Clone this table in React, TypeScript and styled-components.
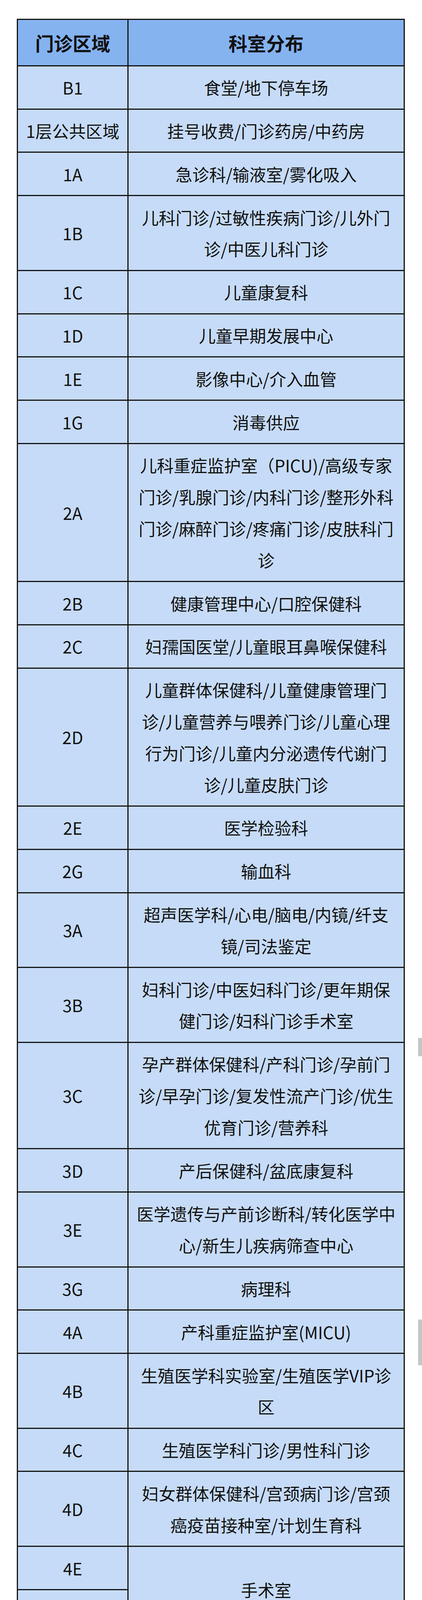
import styled, { createGlobalStyle } from 'styled-components'

const GlobalStyle = createGlobalStyle`
  html, body {
    margin: 0;
    padding: 0;
    background: #ffffff;
  }
  body {
    font-family: "Noto Sans CJK SC", "Noto Sans", sans-serif;
    color: #111111;
  }
`

type Row = { area: string; depts: string[] }

// 门诊 — line breaks kept as in the picture
const clinicRows: Row[] = [
  { area: 'B1', depts: ['食堂/地下停车场'] },
  { area: '1层公共区域', depts: ['挂号收费/门诊药房/中药房'] },
  { area: '1A', depts: ['急诊科/输液室/雾化吸入'] },
  { area: '1B', depts: ['儿科门诊/过敏性疾病门诊/儿外门', '诊/中医儿科门诊'] },
  { area: '1C', depts: ['儿童康复科'] },
  { area: '1D', depts: ['儿童早期发展中心'] },
  { area: '1E', depts: ['影像中心/介入血管'] },
  { area: '1G', depts: ['消毒供应'] },
  {
    area: '2A',
    depts: [
      '儿科重症监护室（PICU)/高级专家',
      '门诊/乳腺门诊/内科门诊/整形外科',
      '门诊/麻醉门诊/疼痛门诊/皮肤科门',
      '诊',
    ],
  },
  { area: '2B', depts: ['健康管理中心/口腔保健科'] },
  { area: '2C', depts: ['妇孺国医堂/儿童眼耳鼻喉保健科'] },
  {
    area: '2D',
    depts: [
      '儿童群体保健科/儿童健康管理门',
      '诊/儿童营养与喂养门诊/儿童心理',
      '行为门诊/儿童内分泌遗传代谢门',
      '诊/儿童皮肤门诊',
    ],
  },
  { area: '2E', depts: ['医学检验科'] },
  { area: '2G', depts: ['输血科'] },
  { area: '3A', depts: ['超声医学科/心电/脑电/内镜/纤支', '镜/司法鉴定'] },
  { area: '3B', depts: ['妇科门诊/中医妇科门诊/更年期保', '健门诊/妇科门诊手术室'] },
  {
    area: '3C',
    depts: ['孕产群体保健科/产科门诊/孕前门', '诊/早孕门诊/复发性流产门诊/优生', '优育门诊/营养科'],
  },
  { area: '3D', depts: ['产后保健科/盆底康复科'] },
  { area: '3E', depts: ['医学遗传与产前诊断科/转化医学中', '心/新生儿疾病筛查中心'] },
  { area: '3G', depts: ['病理科'] },
  { area: '4A', depts: ['产科重症监护室(MICU)'] },
  { area: '4B', depts: ['生殖医学科实验室/生殖医学VIP诊', '区'] },
  { area: '4C', depts: ['生殖医学科门诊/男性科门诊'] },
  { area: '4D', depts: ['妇女群体保健科/宫颈病门诊/宫颈', '癌疫苗接种室/计划生育科'] },
]

// 住院部
const wardRows: Row[] = [
  { area: 'B1', depts: ['食堂/地下停车场'] },
  { area: '1F', depts: ['静配中心/住院处/病区药房/消防控', '制室'] },
  { area: '2F', depts: ['信息机房/病案室/档案室'] },
  { area: '3F', depts: ['产科管理中心'] },
  { area: '4F', depts: ['产房'] },
  { area: '5F', depts: ['新生儿重症监护（NICU)'] },
  { area: '6F', depts: ['新生儿科'] },
  { area: '7F', depts: ['产科一区（一体化产房）'] },
  { area: '8F', depts: ['产科二区(特需)'] },
  { area: '9F', depts: ['产科三区(特需)'] },
  { area: '10F', depts: ['产科四区'] },
  { area: '11F', depts: ['产科五区'] },
  { area: '12F', depts: ['妇科一区（妇女肿瘤、普通妇科）'] },
  { area: '13F', depts: ['妇科二区（妇女内分泌）'] },
  { area: '14F', depts: ['乳腺保健科/小儿外科/外科'] },
  { area: '15F', depts: ['内科/介入血管'] },
  { area: '16F', depts: ['儿科一区'] },
  { area: '17F', depts: ['儿科二区（儿童呼吸）'] },
  { area: '18F', depts: ['孕产康养'] },
  { area: '19F', depts: ['产后康养'] },
]

// grey scroll thumbs left over in the screenshot
const thumbs = [
  { top: 2657, height: 47 },
  { top: 3378, height: 117 },
  { top: 4102, height: 183 },
  { top: 4892, height: 183 },
  { top: 5682, height: 182 },
  { top: 6472, height: 162 },
]

const Lines = ({ lines }: { lines: string[] }) => (
  <span>
    {lines.map((l, i) => (
      <span key={i}>
        {i > 0 && <br />}
        {l}
      </span>
    ))}
  </span>
)

const RowGroup = ({ row }: { row: Row }) => (
  <>
    <Cell>{row.area}</Cell>
    <Cell $wide>
      <Lines lines={row.depts} />
    </Cell>
  </>
)

export default function App() {
  return (
    <>
      <GlobalStyle />
      <Page>
        <Sheet>
          <HeadCell>门诊区域</HeadCell>
          <HeadCell>科室分布</HeadCell>
          {clinicRows.map((r) => (
            <RowGroup key={r.area} row={r} />
          ))}
          <Cell>4E</Cell>
          <Cell $span={2}>手术室</Cell>
          <Cell>4G</Cell>
        </Sheet>
        <Sheet $joined>
          <HeadCell>住院部</HeadCell>
          <HeadCell>楼层分布</HeadCell>
          {wardRows.map((r) => (
            <RowGroup key={r.area} row={r} />
          ))}
        </Sheet>
        {thumbs.map((t) => (
          <ScrollThumb key={t.top} style={{ top: t.top, height: t.height }} />
        ))}
      </Page>
    </>
  )
}

const Page = styled.div`
  position: relative;
  width: 1080px;
  box-sizing: border-box;
  padding: 48px 0 24px 43px;
`

const Sheet = styled.div<{ $joined?: boolean }>`
  display: grid;
  grid-template-columns: 280px 1fr;
  gap: 3px;
  width: 993px;
  padding: 3px;
  box-sizing: border-box;
  background: #141414;
  margin-top: ${(p) => (p.$joined ? '-1px' : '0')};
`

const HeadCell = styled.div`
  display: flex;
  align-items: center;
  justify-content: center;
  padding: 17.5px 10px;
  line-height: 80.8px;
  font-size: 48px;
  font-weight: 700;
  background: #84b3f0;
  color: #111111;
`

const Cell = styled.div<{ $span?: number; $wide?: boolean }>`
  display: flex;
  align-items: center;
  justify-content: center;
  text-align: center;
  padding: 13.5px ${(p) => (p.$wide ? '8px' : '10px')};
  line-height: 80.8px;
  font-size: 43px;
  font-weight: 400;
  white-space: nowrap;
  background: #c6dbf7;
  color: #111111;
  grid-row: ${(p) => (p.$span ? `span ${p.$span}` : 'auto')};
`

const ScrollThumb = styled.div`
  position: absolute;
  right: 0;
  width: 10px;
  background: #c6c6c6;
`
